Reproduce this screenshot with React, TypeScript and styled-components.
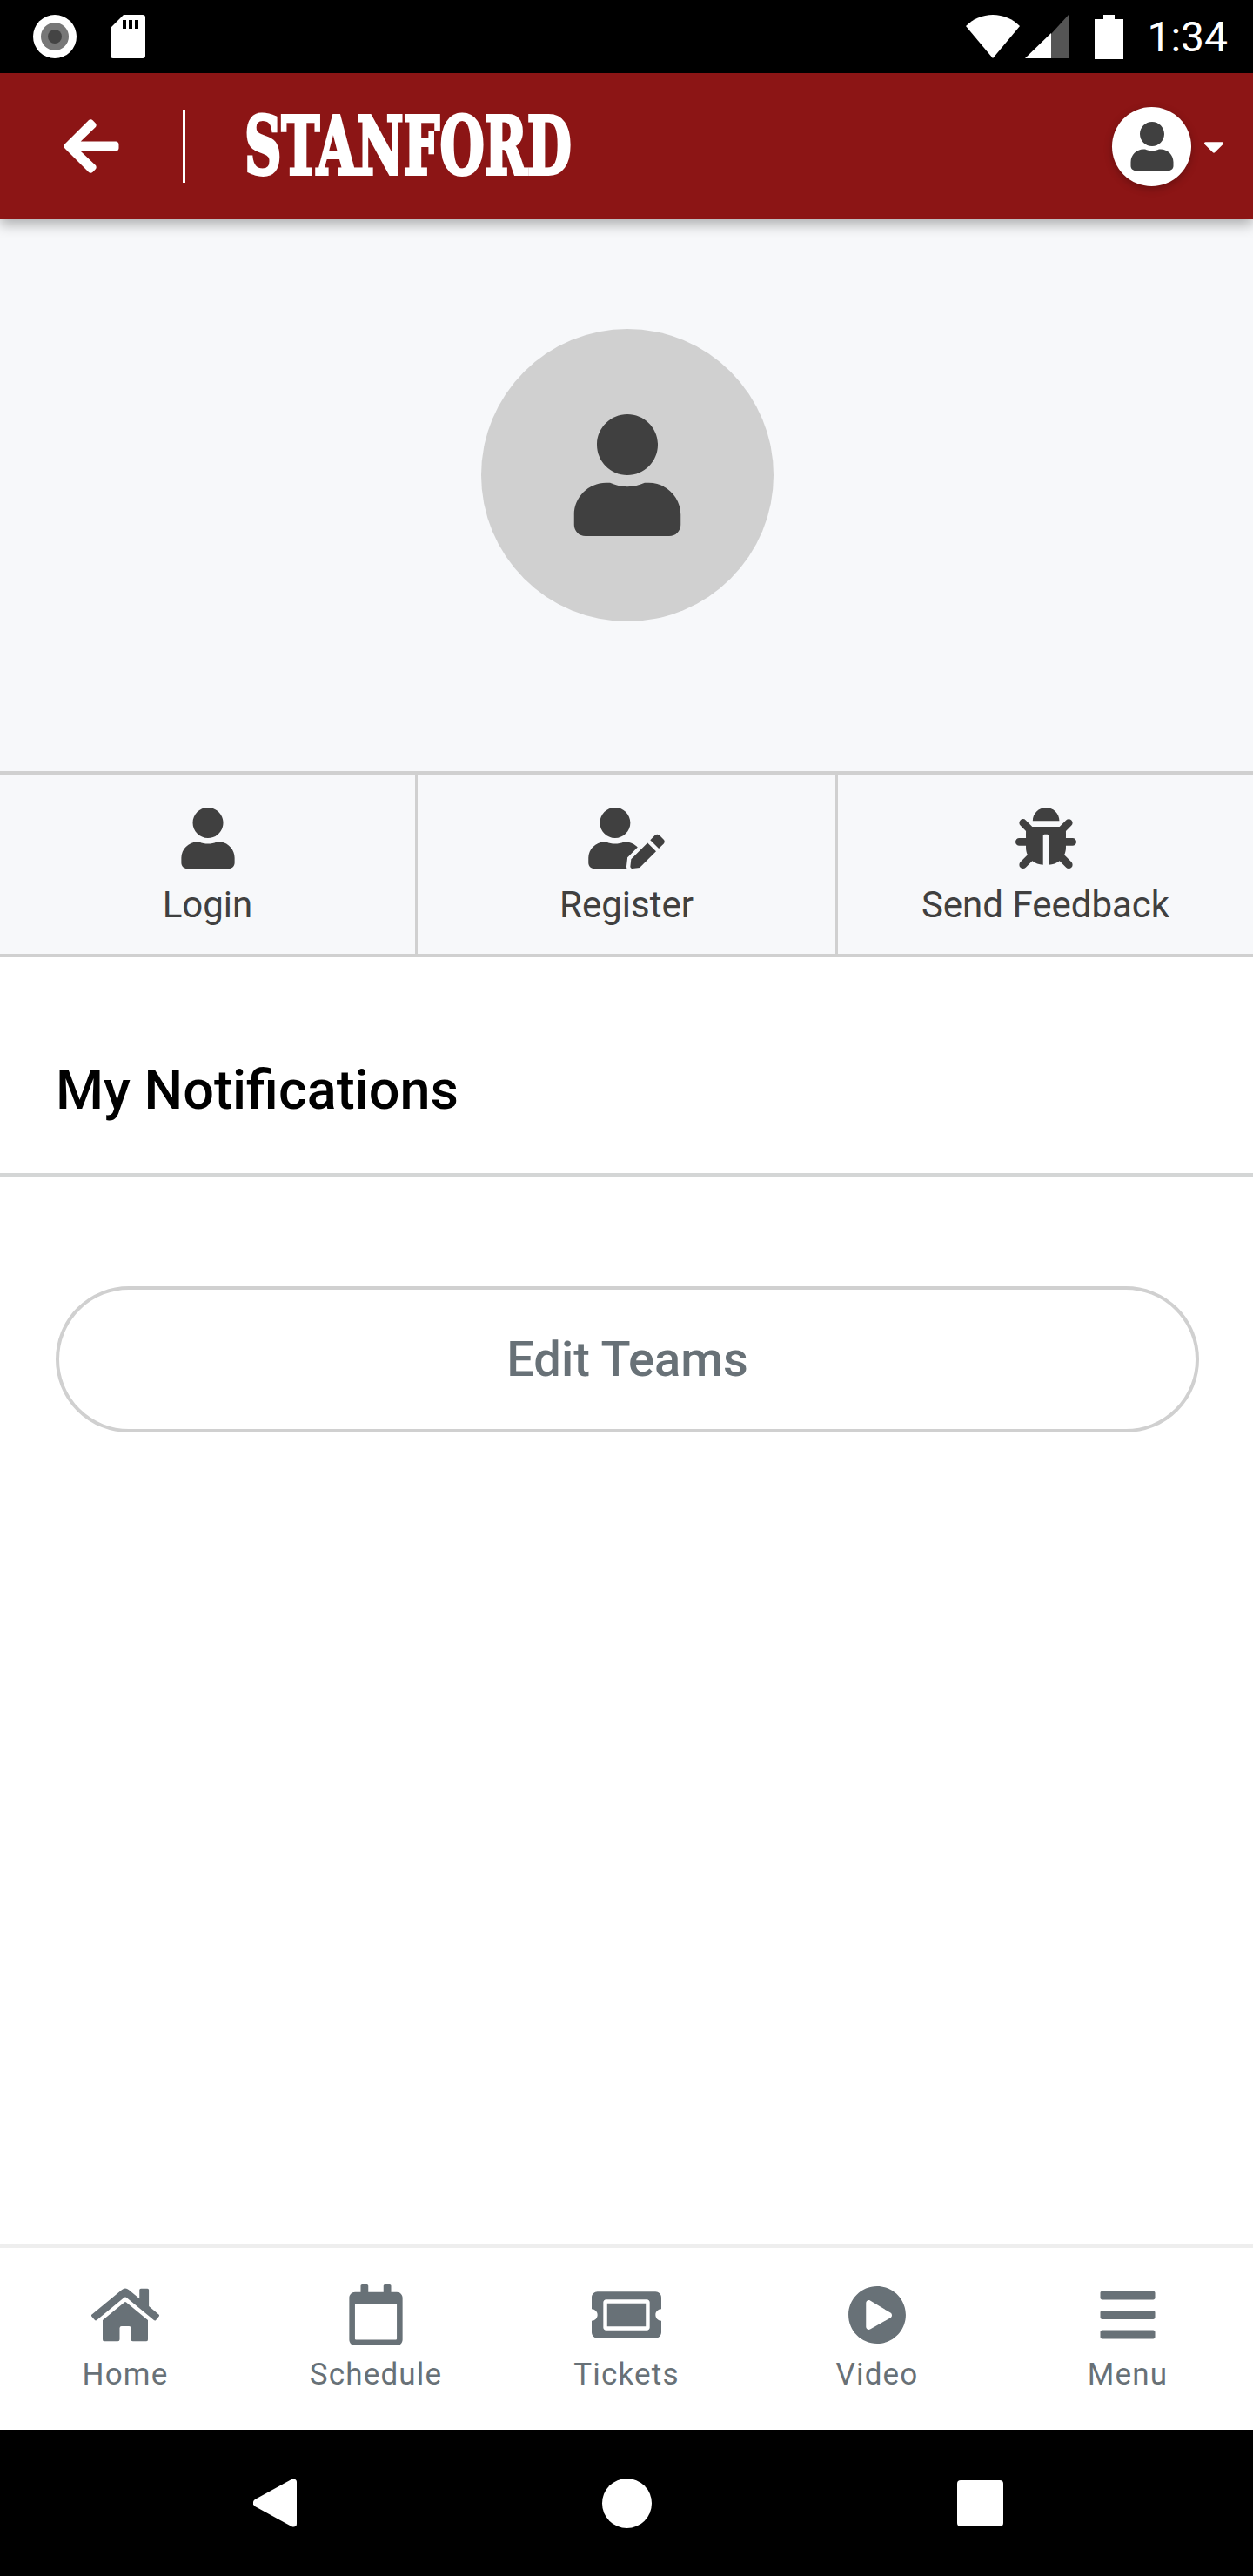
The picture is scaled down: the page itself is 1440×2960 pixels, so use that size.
import styled, { createGlobalStyle } from "styled-components";
import {
  FaArrowLeft,
  FaBars,
  FaBug,
  FaCaretDown,
  FaHome,
  FaPlayCircle,
  FaRegCalendar,
  FaTicketAlt,
  FaUser,
  FaUserEdit,
} from "react-icons/fa";

const GlobalStyle = createGlobalStyle`
  html, body {
    margin: 0;
    padding: 0;
    background: #fff;
    font-family: Roboto, "Liberation Sans", sans-serif;
  }
`;

const Page = styled.div`
  width: 1440px;
  height: 2960px;
  display: flex;
  flex-direction: column;
  overflow: hidden;
`;

const StatusBar = styled.div`
  height: 84px;
  flex: none;
  background: #000;
  display: flex;
  align-items: center;
  justify-content: space-between;
  padding: 0 29px 0 38px;
  box-sizing: border-box;
`;

const StatusGroup = styled.div<{ $gap: number }>`
  display: flex;
  align-items: center;
  gap: ${(p) => p.$gap}px;
`;

const BatterySlot = styled.div`
  display: flex;
  margin-left: 24px;
`;

const Clock = styled.span`
  color: #fff;
  font-size: 48px;
  line-height: 50px;
  margin: 2px 0 0 21px;
`;

const Header = styled.header`
  height: 168px;
  flex: none;
  background: #8c1515;
  display: flex;
  align-items: center;
  padding: 0 26px 0 69px;
  box-sizing: border-box;
  color: #fff;
  position: relative;
  z-index: 1;
  box-shadow: 0 6px 14px rgba(0, 0, 0, 0.3);
`;

const HeaderDivider = styled.div`
  width: 3px;
  height: 84px;
  background: #fff;
  margin: 0 68px 0 69px;
`;

const Wordmark = styled.div`
  width: 374px;
  height: 70px;
  font-family: "DejaVu Serif", serif;
  font-weight: 700;
  font-size: 92px;
  line-height: 70px;
  white-space: nowrap;
  transform-origin: left center;
  transform: scaleX(0.64);
  -webkit-text-stroke: 4px #fff;
`;

const AccountMenu = styled.div`
  margin-left: auto;
  display: flex;
  align-items: center;
  gap: 7px;
`;

const AccountBadge = styled.div`
  width: 91px;
  height: 91px;
  border-radius: 50%;
  background: #fff;
  color: #404040;
  display: flex;
  align-items: center;
  justify-content: center;
  box-shadow: 0 3px 10px rgba(0, 0, 0, 0.25);
`;

const ProfileHero = styled.section`
  background: #f7f8fa;
  padding: 126px 0 172px 2px;
  display: flex;
  justify-content: center;
`;

const AvatarCircle = styled.div`
  width: 336px;
  height: 336px;
  border-radius: 50%;
  background: #d0d0d0;
  color: #404040;
  display: flex;
  align-items: center;
  justify-content: center;
`;

const ActionRow = styled.div`
  display: grid;
  grid-template-columns: 480px 483px 477px;
  background: #f7f8fa;
  border-top: 4px solid #d0d0d0;
  border-bottom: 4px solid #d0d0d0;
`;

const ActionCell = styled.div`
  height: 206px;
  box-sizing: border-box;
  padding-top: 38px;
  display: flex;
  flex-direction: column;
  align-items: center;
  color: #404040;
  border-right: 3px solid #d0d0d0;

  &:last-child {
    border-right: none;
  }
`;

const ActionLabel = styled.span`
  font-size: 42px;
  line-height: 48px;
  margin-top: 18px;
`;

const EditUserIcon = styled(FaUserEdit)`
  width: 88px;
  height: 70px;
`;

const SectionTitle = styled.h2`
  margin: 0;
  height: 252px;
  box-sizing: border-box;
  padding: 56px 0 0 64px;
  display: flex;
  align-items: center;
  font-size: 63px;
  font-weight: 500;
  color: #000;
  border-bottom: 4px solid #d4d6d6;
`;

const Content = styled.main`
  flex: 1;
  padding: 126px 62px 0 64px;
  background: #fff;
`;

const EditButton = styled.button`
  width: 100%;
  height: 168px;
  border: 4px solid #d0d0d0;
  border-radius: 84px;
  background: #fff;
  color: #687177;
  font-family: Roboto, sans-serif;
  font-size: 56px;
  font-weight: 500;
`;

const TabBar = styled.nav`
  height: 213px;
  flex: none;
  box-sizing: border-box;
  border-top: 4px solid #eeeeee;
  display: grid;
  grid-template-columns: repeat(5, 1fr);
  background: #fff;
`;

const Tab = styled.div`
  display: flex;
  flex-direction: column;
  align-items: center;
  color: #687177;
  padding-top: 42px;
`;

const TabIcon = styled.div`
  height: 70px;
  display: flex;
  align-items: center;
  justify-content: center;
`;

const TabLabel = styled.span`
  font-size: 35px;
  line-height: 40px;
  letter-spacing: 1.2px;
  margin-top: 14px;
`;

const SystemNav = styled.div`
  height: 168px;
  flex: none;
  background: #000;
  display: flex;
  align-items: center;
  justify-content: center;
  gap: 351px;
  padding-left: 3px;
`;

const HomeDot = styled.div`
  width: 57px;
  height: 57px;
  border-radius: 50%;
  background: #fff;
`;

const RecentsSquare = styled.div`
  width: 53px;
  height: 53px;
  border-radius: 4px;
  background: #fff;
`;

const tabs = [
  { label: "Home", icon: <FaHome size={78} /> },
  { label: "Schedule", icon: <FaRegCalendar size={70} /> },
  { label: "Tickets", icon: <FaTicketAlt size={80} /> },
  { label: "Video", icon: <FaPlayCircle size={68} /> },
  { label: "Menu", icon: <FaBars size={72} /> },
];

const RecordIcon = () => (
  <svg width="50" height="50" viewBox="0 0 50 50">
    <circle cx="25" cy="25" r="25" fill="#fff" />
    <circle cx="25" cy="25" r="16" fill="#777" />
    <circle cx="25" cy="25" r="8" fill="#444" />
  </svg>
);

const SdCardIcon = () => (
  <svg width="40" height="50" viewBox="0 0 40 50">
    <path
      fillRule="evenodd"
      fill="#fff"
      d="M15 0h22a3 3 0 0 1 3 3v44a3 3 0 0 1-3 3H3a3 3 0 0 1-3-3V15zM14 6v10h4V6zM21 6v10h4V6zM28 6v10h4V6z"
    />
  </svg>
);

const WifiIcon = () => (
  <svg width="62" height="50" viewBox="0 0 62 50">
    <path fill="#fff" d="M31 50 0 13C8 5 19 0 31 0s23 5 31 13z" />
  </svg>
);

const SignalIcon = () => (
  <svg width="50" height="50" viewBox="0 0 50 50">
    <path fill="#555" d="M50 0v50H30V22z" />
    <path fill="#fff" d="M0 50 30 21v29z" />
  </svg>
);

const BatteryIcon = () => (
  <svg width="33" height="51" viewBox="0 0 33 51">
    <path fill="#fff" d="M10 0h13v5h10v46H0V5h10z" />
  </svg>
);

const BackIcon = () => (
  <svg width="50" height="56" viewBox="0 0 50 56">
    <path
      fill="#fff"
      d="M2 24 44 1c3-1.5 6 0 6 3v48c0 3-3 4.500-6 3L2 32c-3-2-3-6 0-8z"
    />
  </svg>
);

export default function App() {
  return (
    <Page>
      <GlobalStyle />
      <StatusBar>
        <StatusGroup $gap={39}>
          <RecordIcon />
          <SdCardIcon />
        </StatusGroup>
        <StatusGroup $gap={6}>
          <WifiIcon />
          <SignalIcon />
          <BatterySlot>
            <BatteryIcon />
          </BatterySlot>
          <Clock>1:34</Clock>
        </StatusGroup>
      </StatusBar>
      <Header>
        <FaArrowLeft size={72} />
        <HeaderDivider />
        <Wordmark>STANFORD</Wordmark>
        <AccountMenu>
          <AccountBadge>
            <FaUser size={56} />
          </AccountBadge>
          <FaCaretDown size={38} />
        </AccountMenu>
      </Header>
      <ProfileHero>
        <AvatarCircle>
          <FaUser size={140} />
        </AvatarCircle>
      </ProfileHero>
      <ActionRow>
        <ActionCell>
          <FaUser size={70} />
          <ActionLabel>Login</ActionLabel>
        </ActionCell>
        <ActionCell>
          <EditUserIcon />
          <ActionLabel>Register</ActionLabel>
        </ActionCell>
        <ActionCell>
          <FaBug size={70} />
          <ActionLabel>Send Feedback</ActionLabel>
        </ActionCell>
      </ActionRow>
      <SectionTitle>My Notifications</SectionTitle>
      <Content>
        <EditButton>Edit Teams</EditButton>
      </Content>
      <TabBar>
        {tabs.map((tab) => (
          <Tab key={tab.label}>
            <TabIcon>{tab.icon}</TabIcon>
            <TabLabel>{tab.label}</TabLabel>
          </Tab>
        ))}
      </TabBar>
      <SystemNav>
        <BackIcon />
        <HomeDot />
        <RecentsSquare />
      </SystemNav>
    </Page>
  );
}
